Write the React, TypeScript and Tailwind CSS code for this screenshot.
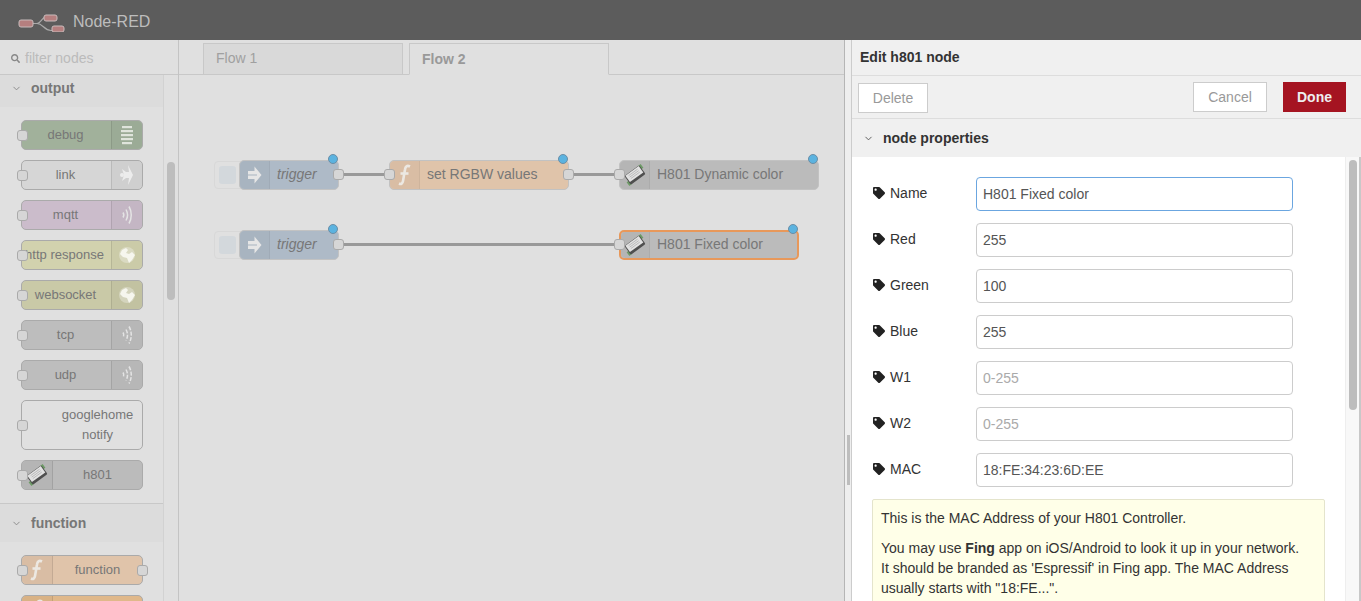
import React from 'react';
import { ChevronDown } from 'lucide-react';
import { FaSearch, FaTag } from 'react-icons/fa';

const Arrow = () => (
    <svg width="16" height="20" viewBox="0 0 16 20" fill="#e6e6e6">
        <path d="M1 6h6.500V1.500L14.500 10l-7 8.500V14H1v-3.400h9V9.400H1z" />
    </svg>
);

const Fn = () => (
    <svg width="16" height="24" viewBox="0 0 16 24" fill="none" stroke="#ece8e2" strokeWidth="2.600">
        <path d="M13 3.500c-3-1.500-4.600 0-5 3L6 18c-.4 2.500-1.800 3.500-4 2.500" />
        <path d="M3.500 10.500h8" />
    </svg>
);

const Lines = () => (
    <svg width="14" height="20" viewBox="0 0 14 20" fill="#dfe4dc">
        <rect x="2" y="1" width="10" height="2.200" />
        <rect x="1" y="5" width="12" height="2.200" />
        <rect x="1" y="9" width="12" height="2.200" />
        <rect x="1" y="13" width="12" height="2.200" />
        <rect x="2" y="17" width="10" height="2.200" />
    </svg>
);

const LinkOut = () => (
    <svg width="16" height="22" viewBox="0 0 16 22" fill="#ececec">
        <path d="M9 1l5 10-5 10 1-7H7L3 17l2-6-2-6 4 3h3z" />
        <circle cx="3" cy="11" r="2" />
    </svg>
);

const Waves = ({ full }: { full?: boolean }) => (
    <svg width="12" height="22" viewBox="0 0 12 22" fill="none" stroke="#e4e4e4" strokeWidth="1.500" strokeDasharray={full ? undefined : '4 1.500'}>
        <path d="M2 8.500c1 1.500 1 3.500 0 5" />
        <path d="M5 5.500c2 3.500 2 7.500 0 11" />
        <path d="M8 2.500c3 5 3 12 0 17" />
    </svg>
);

const Globe = () => (
    <svg width="18" height="18" viewBox="0 0 18 18">
        <circle cx="9" cy="9" r="8" fill="#ffffff" fillOpacity="0.3" />
        <path d="M4 4l4-2 2 2-2 3 3 1 3-2 3 3-3 5-3 3-2-5-4-1-3-3z" fill="#f6f6ee" />
    </svg>
);

const Device = () => (
    <svg width="22" height="22" viewBox="0 0 24 24">
        <g transform="rotate(-36 12 12)">
            <rect x="0" y="13" width="4" height="5" fill="#6d9a66" />
            <rect x="20" y="6" width="4" height="5" fill="#6d9a66" />
            <rect x="2" y="6" width="20" height="12" rx="1.500" fill="#4f4f4f" />
            <rect x="3" y="6.500" width="18" height="8.500" fill="#e2e2e2" />
            <path d="M6 8.500h12M6 10.500h12M6 12.500h12" stroke="#b0b0b0" strokeWidth="0.800" />
        </g>
    </svg>
);

const Port = ({ className }: { className: string }) => (
    <span className={`absolute w-[11px] h-[11px] rounded-[3px] bg-[#d6d6d6] border border-[#aaa] ${className}`}></span>
);

const PaletteNode = ({ label, bg, icon, side = 'right', input = true, output = false, tall = false }: {
    label: React.ReactNode;
    bg: string;
    icon?: React.ReactNode;
    side?: 'left' | 'right';
    input?: boolean;
    output?: boolean;
    tall?: boolean;
}) => (
    <div className={`relative ml-[21px] w-[122px] ${tall ? 'h-[50px]' : 'h-[30px]'} ${bg} border border-[#aaa] rounded-[5px] flex ${side === 'left' ? 'flex-row' : 'flex-row-reverse'}`}>
        {icon ? (
            <div className={`w-[31px] shrink-0 flex items-center justify-center bg-black/[.03] ${side === 'left' ? 'border-r rounded-l-[5px]' : 'border-l rounded-r-[5px]'} border-black/10`}>
                {icon}
            </div>
        ) : (
            <div className="w-[31px] shrink-0"></div>
        )}
        <div className={`flex-1 min-w-0 flex items-center justify-center text-center text-[13px] leading-[20px] text-[#777] whitespace-nowrap ${side === 'right' ? 'pr-[2px]' : ''}`}>
            {label}
        </div>
        {input && <Port className={`left-[-5px] ${tall ? 'top-[19px]' : 'top-[9px]'}`} />}
        {output && <Port className="right-[-6px] top-[9px]" />}
    </div>
);

const SectionHead = ({ title, border }: { title: string; border?: boolean }) => (
    <div className={`flex items-center bg-[#dcdcdc] text-[14px] font-bold text-[#777] ${border ? 'h-[39px] border-t border-[#c8c8c8]' : 'h-[32px] pb-[6px]'}`}>
        <ChevronDown size={11} className="ml-[11px] mr-[9px] text-[#888]" />
        {title}
    </div>
);

const Palette = () => (
    <div className="w-[179px] shrink-0 flex flex-col border-r border-[#c4c4c4] bg-[#e0e0e0]">
        <div className="h-[35px] shrink-0 flex items-center border-b border-[#c8c8c8] pl-[11px] pt-[2px] text-[14px] text-[#bbb]">
            <FaSearch size={9} className="text-[#888] mr-[5px]" />
            filter nodes
        </div>
        <div className="flex-1 flex min-h-0">
            <div className="w-[163px] shrink-0 overflow-hidden">
                <SectionHead title="output" />
                <div className="flex flex-col gap-[10px] pt-[13px] pb-[13px]">
                    <PaletteNode label="debug" bg="bg-[#a1b19b]" icon={<Lines />} />
                    <PaletteNode label="link" bg="bg-[#d6d6d6]" icon={<LinkOut />} />
                    <PaletteNode label="mqtt" bg="bg-[#cbbccb]" icon={<Waves full />} />
                    <PaletteNode label={<span className="ml-[-2px]">http response</span>} bg="bg-[#d2d2ae]" icon={<Globe />} />
                    <PaletteNode label="websocket" bg="bg-[#c9c9a7]" icon={<Globe />} />
                    <PaletteNode label="tcp" bg="bg-[#bdbdbd]" icon={<Waves />} />
                    <PaletteNode label="udp" bg="bg-[#bdbdbd]" icon={<Waves />} />
                    <PaletteNode label={<span>googlehome<br />notify</span>} bg="bg-[#e0e0e0]" side="left" tall />
                    <PaletteNode label="h801" bg="bg-[#bbbbbb]" icon={<Device />} side="left" />
                </div>
                <SectionHead title="function" border />
                <div className="flex flex-col gap-[10px] pt-[13px]">
                    <PaletteNode label="function" bg="bg-[#e0c4aa]" icon={<Fn />} side="left" output />
                    <PaletteNode label="" bg="bg-[#e0b88a]" icon={<Fn />} side="left" output />
                </div>
            </div>
            <div className="flex-1 border-l border-[#d2d2d2] pl-[3px] pt-[87px]">
                <div className="w-[8px] h-[138px] rounded-[4px] bg-[#bdbdbd]"></div>
            </div>
        </div>
    </div>
);

const CanvasNode = ({ label, pos, width, bg, icon, italic, left = true, right = false, selected, button }: {
    label: string;
    pos: string;
    width: string;
    bg: string;
    icon: React.ReactNode;
    italic?: boolean;
    left?: boolean;
    right?: boolean;
    selected?: boolean;
    button?: boolean;
}) => (
    <div className={`absolute ${pos} ${width} h-[30px]`}>
        {button && (
            <div className="absolute left-[-25px] top-[1px] w-[30px] h-[28px] rounded-[4px] border border-[#d8d8d8] pl-[4px] pt-[4px]">
                <div className="w-[17px] h-[18px] rounded-[3px] bg-[#d3d8dc]"></div>
            </div>
        )}
        <div className={`relative w-full h-full rounded-[5px] flex ${bg} ${selected ? 'border-2 border-[#e8985a]' : 'border border-[#c2c2c2]'}`}>
            <div className={`${selected ? 'w-[29px]' : 'w-[30px]'} shrink-0 flex items-center justify-center bg-black/[.03] border-r border-black/5 rounded-l-[5px]`}>
                {icon}
            </div>
            <div className={`pl-[7px] pb-[2px] flex items-center text-[14px] text-[#777] whitespace-nowrap ${italic ? 'italic' : ''}`}>
                {label}
            </div>
        </div>
        {left && <Port className="left-[-5px] top-[9px]" />}
        {right && <Port className="right-[-5px] top-[9px]" />}
        <span className="absolute right-[1px] top-[-6px] w-[10px] h-[10px] rounded-full bg-[#5bb3e0] border border-[#6b8ea6]"></span>
    </div>
);

const Workspace = () => (
    <div className="w-[665px] shrink-0 flex flex-col bg-[#e0e0e0]">
        <div className="h-[35px] shrink-0 flex items-end gap-[6px] pl-[24px] border-b border-[#c8c8c8]">
            <div className="w-[200px] h-[32px] mb-[-1px] bg-[#d9d9d9] border border-[#c8c8c8] pl-[12px] pt-[4px] text-[14px] text-[#a0a0a0]">Flow 1</div>
            <div className="w-[200px] h-[32px] mb-[-1px] bg-[#e0e0e0] border border-[#c8c8c8] border-b-[#e0e0e0] pl-[12px] pt-[5px] text-[14px] font-bold text-[#999]">Flow 2</div>
        </div>
        <div className="relative flex-1">
            <svg className="absolute inset-0" width="665" height="526" fill="none" stroke="#999" strokeWidth="3">
                <path d="M160 99.500h50" />
                <path d="M390 99.500h50" />
                <path d="M160 169.500h280" />
            </svg>
            <CanvasNode label="trigger" pos="left-[60px] top-[85px]" width="w-[100px]" bg="bg-[#aebac7]" icon={<Arrow />} italic right button left={false} />
            <CanvasNode label="set RGBW values" pos="left-[210px] top-[85px]" width="w-[180px]" bg="bg-[#e0c4aa]" icon={<Fn />} right />
            <CanvasNode label="H801 Dynamic color" pos="left-[440px] top-[85px]" width="w-[200px]" bg="bg-[#bbbbbb]" icon={<Device />} />
            <CanvasNode label="trigger" pos="left-[60px] top-[155px]" width="w-[100px]" bg="bg-[#aebac7]" icon={<Arrow />} italic right button left={false} />
            <CanvasNode label="H801 Fixed color" pos="left-[440px] top-[155px]" width="w-[180px]" bg="bg-[#bbbbbb]" icon={<Device />} selected />
        </div>
    </div>
);

const Field = ({ label, value, placeholder, focused }: { label: string; value?: string; placeholder?: string; focused?: boolean }) => (
    <div className="flex items-center h-[34px] mb-[12px] text-[14px] text-[#333]">
        <div className="w-[104px] flex items-center pl-[1px] pb-[2px]">
            <FaTag size={12} className="mr-[5px] text-[#222]" />
            {label}
        </div>
        <input
            readOnly
            value={value ?? ''}
            placeholder={placeholder}
            className={`w-[317px] h-[34px] rounded-[4px] bg-white px-[6px] text-[14px] text-[#555] placeholder:text-[#aaa] outline-none border ${focused ? 'border-[#6ba6e0]' : 'border-[#ccc]'}`}
        />
    </div>
);

const Editor = () => (
    <div className="flex-1 min-w-0 flex flex-col bg-white text-[#333]">
        <div className="h-[36px] shrink-0 flex items-center pl-[8px] bg-[#f0f0f0] border-b border-[#ddd] text-[14px] font-bold">
            Edit h801 node
        </div>
        <div className="h-[43px] shrink-0 flex items-center pl-[6px] pr-[15px] bg-[#f0f0f0] border-b border-[#ddd] text-[14px]">
            <button className="w-[70px] h-[30px] mt-[1px] pt-[1px] bg-white border border-[#ccc] text-[#999]">Delete</button>
            <button className="ml-auto w-[74px] h-[30px] mb-[1px] pt-[1px] bg-white border border-[#ccc] text-[#999]">Cancel</button>
            <button className="ml-[16px] w-[63px] h-[30px] mb-[1px] pt-[1px] bg-[#a51421] text-[#eee] font-bold">Done</button>
        </div>
        <div className="h-[38px] shrink-0 flex items-center bg-[#f0f0f0] text-[14px] font-bold">
            <ChevronDown size={11} className="ml-[11px] mr-[9px] text-[#555]" />
            node properties
        </div>
        <div className="flex-1 flex min-h-0">
            <div className="w-[493px] shrink-0 overflow-hidden pt-[20px] pl-[20px]">
                <Field label="Name" value="H801 Fixed color" focused />
                <Field label="Red" value="255" />
                <Field label="Green" value="100" />
                <Field label="Blue" value="255" />
                <Field label="W1" placeholder="0-255" />
                <Field label="W2" placeholder="0-255" />
                <Field label="MAC" value="18:FE:34:23:6D:EE" />
                <div className="w-[453px] bg-[#ffffe8] border border-[#e4e4cc] rounded-[2px] pl-[8px] pr-[20px] pt-[8px] pb-[10px] text-[14px] leading-[20px] text-[#333]">
                    <p className="mb-[10px]">This is the MAC Address of your H801 Controller.</p>
                    <p>You may use <b>Fing</b> app on iOS/Android to look it up in your network. It should be branded as 'Espressif' in Fing app. The MAC Address usually starts with "18:FE...".</p>
                </div>
            </div>
            <div className="flex-1 bg-[#f8f8f8] border-l border-r-2 border-l-[#eee] border-r-[#c8c8c8] pl-[3px] pt-[3px]">
                <div className="w-[8px] h-[250px] rounded-[4px] bg-[#bdbdbd]"></div>
            </div>
        </div>
    </div>
);

export default function App() {
    return (
        <div className="w-[1361px] h-[601px] overflow-hidden flex flex-col font-['Liberation_Sans',Arial,sans-serif]">
            <div className="h-[40px] shrink-0 flex items-center pt-[4px] bg-[#5c5c5c] text-[16px] text-[#bdbdbd]">
                <svg className="ml-[18px] mr-[8px]" width="47" height="20" viewBox="0 0 47 20" fill="none">
                    <path d="M14 11.500h5c4 0 5-7 10-7h3M19 11.500c6 0 7 7 14 7h2" stroke="#aaa" strokeWidth="1.200" />
                    <rect x="1" y="8" width="14" height="7" rx="2" fill="#b57f7f" stroke="#c9bcbc" />
                    <rect x="26" y="3" width="13" height="6" rx="2" fill="#b57f7f" stroke="#c9bcbc" />
                    <rect x="34" y="14" width="12" height="6" rx="2" fill="#b57f7f" stroke="#c9bcbc" />
                </svg>
                Node-RED
            </div>
            <div className="flex-1 min-h-0 flex">
                <Palette />
                <Workspace />
                <div className="w-[8px] shrink-0 bg-[#eeeeee] border-x border-l-[#b5b5b5] border-r-[#ccc] pl-[2px] pt-[395px]">
                    <div className="w-[3px] h-[50px] bg-[#bdbdbd]"></div>
                </div>
                <Editor />
            </div>
        </div>
    );
}
